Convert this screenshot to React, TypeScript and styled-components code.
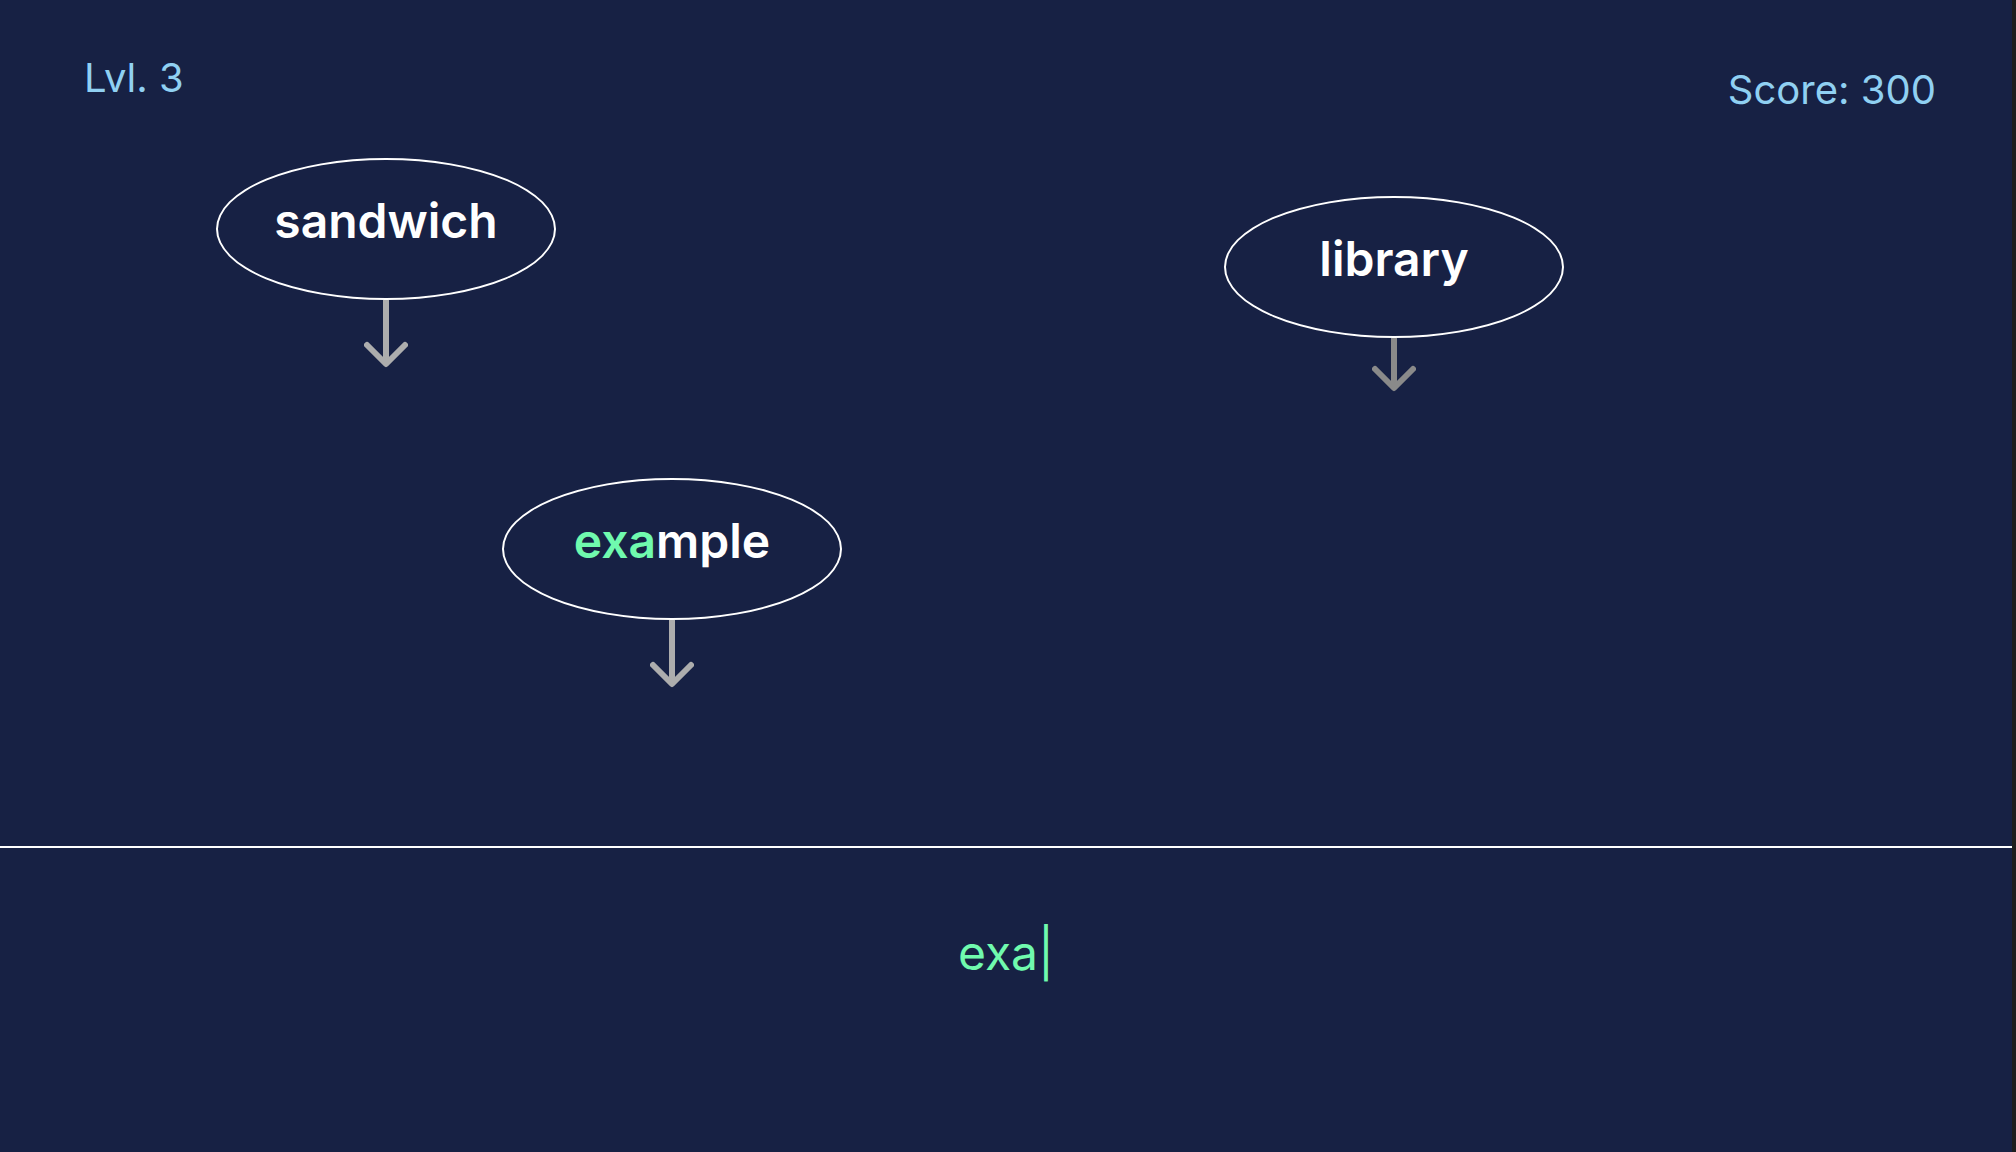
import React, { useState } from "react";
import styled, { createGlobalStyle } from "styled-components";

const colors = {
  night: "#172144",
  sky: "#90d0f2",
  mint: "#70faae",
  edge: "#1e1e1e",
};

const GlobalStyle = createGlobalStyle`
  * { box-sizing: border-box; }
  body {
    margin: 0;
    background: ${colors.edge};
    font-family: Inter, "Liberation Sans", sans-serif;
  }
`;

const Game = styled.main`
  display: grid;
  grid-template-rows: 1fr 304px;
  min-height: 100vh;
  margin-right: 4px;
  background: ${colors.night};
`;

const Field = styled.section`
  position: relative;
  border-bottom: 2px solid #fff;
`;

const StatusBar = styled.header`
  display: flex;
  justify-content: space-between;
  padding: 54px 76px 0 84px;
`;

const Status = styled.p<{ $drop?: number }>`
  margin: 0;
  padding-top: ${(p) => p.$drop ?? 0}px;
  color: ${colors.sky};
  font-size: 40px;
  font-weight: 400;
  line-height: 48px;
`;

const Falling = styled.div<{ $x: number; $y: number }>`
  position: absolute;
  left: ${(p) => p.$x}px;
  top: ${(p) => p.$y}px;
  display: flex;
  flex-direction: column;
  align-items: center;
  width: 340px;
`;

const Bubble = styled.div`
  width: 100%;
  height: 142px;
  padding-top: 32px;
  border: 2px solid #fff;
  border-radius: 50%;
  color: #fff;
  font-size: 48px;
  font-weight: 600;
  line-height: 58px;
  text-align: center;
`;

const Typed = styled.span`
  color: ${colors.mint};
`;

const Arrow = styled.svg`
  display: block;
  fill: none;
  stroke-width: 6px;
`;

const Console = styled.section`
  padding-top: 76px;
`;

const Entry = styled.input`
  display: block;
  width: 100%;
  height: 58px;
  padding: 0;
  border: 0;
  outline: 0;
  background: transparent;
  color: ${colors.mint};
  font-family: inherit;
  font-size: 48px;
  font-weight: 400;
  line-height: 58px;
  text-align: center;
`;

interface Word {
  text: string;
  x: number;
  y: number;
  speed: number;
  tone: string;
}

const words: Word[] = [
  { text: "sandwich", x: 216, y: 158, speed: 64, tone: "#adadad" },
  { text: "library", x: 1224, y: 196, speed: 50, tone: "#8a8a8a" },
  { text: "example", x: 502, y: 478, speed: 64, tone: "#adadad" },
];

function FallingWord({ word, typed }: { word: Word; typed: string }) {
  const hit = typed !== "" && word.text.startsWith(typed) ? typed.length : 0;
  const tip = word.speed;
  return (
    <Falling $x={word.x} $y={word.y}>
      <Bubble>
        <Typed>{word.text.slice(0, hit)}</Typed>
        {word.text.slice(hit)}
      </Bubble>
      <Arrow width="44" height={tip + 4} stroke={word.tone} aria-hidden="true">
        <path d={`M22 0V${tip}`} />
        <path
          d={`M3 ${tip - 19}L22 ${tip}L41 ${tip - 19}`}
          strokeLinecap="round"
          strokeLinejoin="round"
        />
      </Arrow>
    </Falling>
  );
}

export default function App() {
  const [entry, setEntry] = useState("exa|");
  const typed = entry.replace("|", "");
  return (
    <>
      <GlobalStyle />
      <Game>
        <Field>
          <StatusBar>
            <Status>Lvl. 3</Status>
            <Status $drop={12}>Score: 300</Status>
          </StatusBar>
          {words.map((word) => (
            <FallingWord key={word.text} word={word} typed={typed} />
          ))}
        </Field>
        <Console>
          <Entry
            aria-label="Type the word"
            value={entry}
            onChange={(e) => setEntry(e.target.value.replace("|", "") + "|")}
          />
        </Console>
      </Game>
    </>
  );
}
